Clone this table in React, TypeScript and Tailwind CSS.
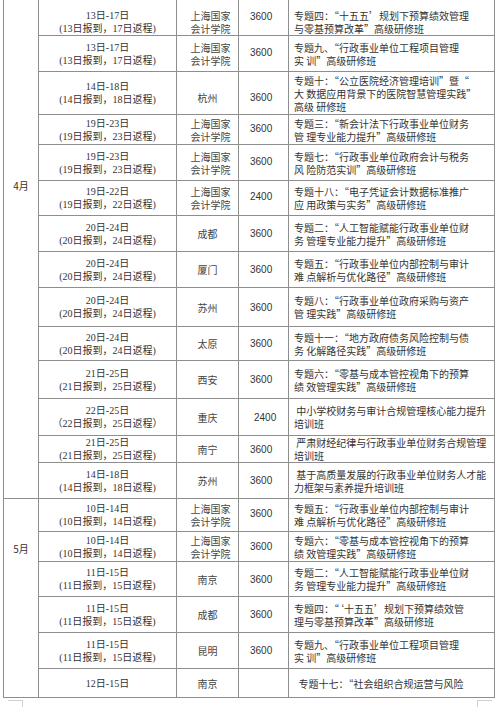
type Row = {
  h: string;
  date: string[];
  loc: string[];
  price: string;
  topic: string[];
  pad?: string;
  locCls?: string;
  priceCls?: string;
};

const sh = ["上海国家", "会计学院"];

const april: Row[] = [
  { h: "h-[36px]", pad: "pt-[9px]", date: ["13日-17日", "(13日报到，17日返程)"], loc: sh, price: "3600", priceCls: "align-bottom pb-[3px]", topic: ["专题四：“十五五’规划下预算绩效管理", "与零基预算改革”高级研修班"] },
  { h: "h-[36px]", date: ["13日-17日", "(13日报到，17日返程)"], loc: sh, price: "3600", priceCls: "align-bottom pb-[3px]", topic: ["专题九、“行政事业单位工程项目管理", "实 训”高级研修班"] },
  { h: "h-[43px]", date: ["14日-18日", "(14日报到，18日返程)"], loc: ["杭州"], price: "3600", locCls: "pt-[8px]", priceCls: "pt-[8px]", topic: ["专题十：“公立医院经济管理培训”暨“", "大 数据应用背景下的医院智慧管理实践”", "高级 研修班"] },
  { h: "h-[30px]", date: ["19日-23日", "(19日报到，23日返程)"], loc: sh, price: "3600", priceCls: "align-bottom pb-[2px]", topic: ["专题三：“新会计法下行政事业单位财务", "管 理专业能力提升”高级研修班"] },
  { h: "h-[36px]", date: ["19日-23日", "(19日报到，23日返程)"], loc: sh, price: "3600", priceCls: "align-bottom pb-[3px]", topic: ["专题七：“行政事业单位政府会计与税务", "风 险防范实训”高级研修班"] },
  { h: "h-[35px]", date: ["19日-22日", "(19日报到，22日返程)"], loc: sh, price: "2400", priceCls: "align-bottom pb-[3px]", topic: ["专题十八：“电子凭证会计数据标准推广", "应 用政策与实务”高级研修班"] },
  { h: "h-[36px]", date: ["20日-24日", "(20日报到，24日返程)"], loc: ["成都"], price: "3600", topic: ["专题二：“人工智能赋能行政事业单位财", "务 管理专业能力提升”高级研修班"] },
  { h: "h-[36px]", date: ["20日-24日", "(20日报到，24日返程)"], loc: ["厦门"], price: "3600", topic: ["专题五：“行政事业单位内部控制与审计", "难 点解析与优化路径”高级研修班"] },
  { h: "h-[39px]", date: ["20日-24日", "(20日报到，24日返程)"], loc: ["苏州"], price: "3600", topic: ["专题八：“行政事业单位政府采购与资产", "管 理实践”高级研修班"] },
  { h: "h-[34px]", date: ["20日-24日", "(20日报到，24日返程)"], loc: ["太原"], price: "3600", topic: ["专题十一：“地方政府债务风险控制与债", "务 化解路径实践”高级研修班"] },
  { h: "h-[38px]", date: ["21日-25日", "(21日报到，25日返程)"], loc: ["西安"], price: "3600", topic: ["专题六：“零基与成本管控视角下的预算", "绩 效管理实践”高级研修班"] },
  { h: "h-[37px]", date: ["22日-25日", "（22日报到，25日返程）"], loc: ["重庆"], price: "2400", priceCls: "pl-[15px]", topic: [" 中小学校财务与审计合规管理核心能力提升", "培训班"] },
  { h: "h-[27px]", date: ["21日-25日", "(21日报到，25日返程)"], loc: ["南宁"], price: "3600", topic: [" 严肃财经纪律与行政事业单位财务合规管理", "培训班"] },
  { h: "h-[36px]", date: ["14日-18日", "(14日报到，18日返程)"], loc: ["苏州"], price: "3600", topic: [" 基于高质量发展的行政事业单位财务人才能", "力框架与素养提升培训班"] },
];

const may: Row[] = [
  { h: "h-[33px]", date: ["10日-14日", "(10日报到，14日返程)"], loc: sh, price: "3600", priceCls: "align-bottom pb-[3px] pl-[8px]", topic: ["专题五：“行政事业单位内部控制与审计", "难 点解析与优化路径”高级研修班"] },
  { h: "h-[30px]", date: ["10日-14日", "(10日报到，14日返程)"], loc: sh, price: "3600", priceCls: "align-bottom pb-[1px] pl-[8px]", topic: ["专题六：“零基与成本管控视角下的预算", "绩 效管理实践”高级研修班"] },
  { h: "h-[35px]", date: ["11日-15日", "(11日报到，15日返程)"], loc: ["南京"], price: "3600", topic: ["专题二：“人工智能赋能行政事业单位财", "务 管理专业能力提升”高级研修班"] },
  { h: "h-[36px]", date: ["11日-15日", "(11日报到，15日返程)"], loc: ["成都"], price: "3600", topic: ["专题四：“‘十五五’规划下预算绩效管", "理与零基预算改革”高级研修班"] },
  { h: "h-[36px]", date: ["11日-15日", "(11日报到，15日返程)"], loc: ["昆明"], price: "3600", topic: ["专题九、“行政事业单位工程项目管理", "实 训”高级研修班"] },
  { h: "h-[29px]", date: ["12日-15日"], loc: ["南京"], price: "", locCls: "align-bottom pb-[0px]", topic: ["  专题十七：“社会组织合规运营与风险"] },
];

const cell = "border border-[#8e8e8e] p-0";

function Lines({ items }: { items: string[] }) {
  return (
    <>
      {items.map((t, i) => (
        <div key={i} className="whitespace-pre">
          {t}
        </div>
      ))}
    </>
  );
}

function Body({ rows, month, monthPad }: { rows: Row[]; month: string; monthPad: string }) {
  return (
    <>
      {rows.map((r, i) => (
        <tr key={i} className={r.h}>
          {i === 0 && (
            <td rowSpan={rows.length} className={`${cell} align-top text-center ${monthPad}`}>
              {month}
            </td>
          )}
          <td className={`${cell} align-middle text-center font-['Liberation_Serif','Noto_Sans_CJK_SC',serif] ${r.pad ?? ""}`}>
            <Lines items={r.date} />
          </td>
          <td className={`${cell} align-middle text-center text-[#444] ${r.loc === sh ? "pl-[6px]" : ""} ${r.pad ?? ""} ${r.locCls ?? ""}`}>
            <Lines items={r.loc} />
          </td>
          <td className={`${cell} align-middle text-left pl-[11px] font-['Liberation_Sans',sans-serif] ${r.priceCls ?? ""}`}>
            {r.price}
          </td>
          <td className={`${cell} align-middle text-left pl-[5px] ${r.pad ?? ""}`}>
            <Lines items={r.topic} />
          </td>
        </tr>
      ))}
    </>
  );
}

export default function App() {
  return (
    <div className="w-[500px] h-[707px] overflow-hidden bg-white text-[#333] font-['Noto_Sans_CJK_SC',sans-serif]" lang="zh-CN">
      <table className="table-fixed border-collapse w-[491px] ml-[3px] -mt-px text-[10px] leading-[13px]">
        <colgroup>
          <col className="w-[35px]" />
          <col className="w-[138px]" />
          <col className="w-[62px]" />
          <col className="w-[50px]" />
          <col className="w-[206px]" />
        </colgroup>
        <tbody>
          <Body rows={april} month="4月" monthPad="pt-[179px]" />
          <Body rows={may} month="5月" monthPad="pt-[43px]" />
        </tbody>
      </table>
      <div className="flex mt-[2px]">
        <div className="ml-[8px] w-[15px] h-[7px] border-t border-r border-[#d0d0d0]" />
        <div className="ml-auto mr-[8px] w-[15px] h-[7px] border-t border-l border-[#d0d0d0]" />
      </div>
    </div>
  );
}
